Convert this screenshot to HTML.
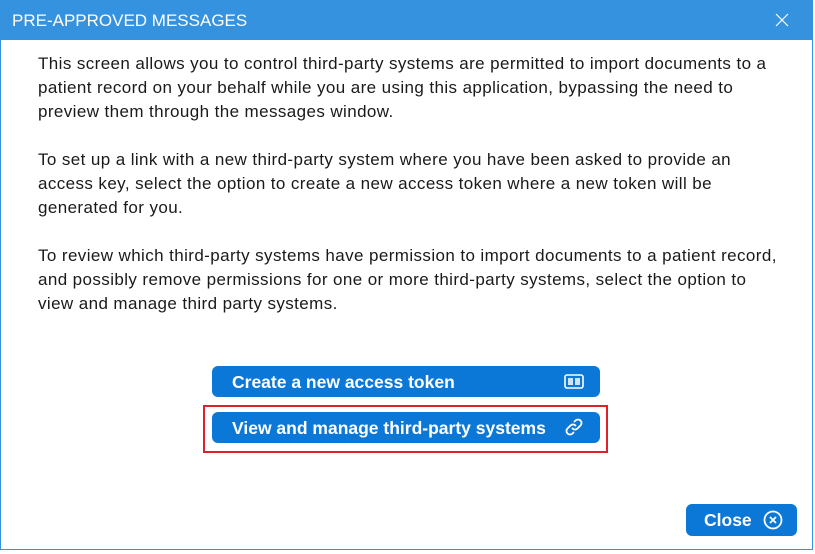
<!DOCTYPE html>
<html><head><meta charset="utf-8"><style>
html,body{margin:0;padding:0;background:#fff;width:815px;height:554px;overflow:hidden;font-family:"Liberation Sans",sans-serif}
.win{position:absolute;left:0;top:0;width:811px;height:549px;border:1px solid #3592df;border-top:none;background:#fff}
.title{position:absolute;left:0;top:0;width:813px;height:40px;background:#3592df;color:#fff;font-size:17px;line-height:42px}
.title span{position:absolute;left:12px;top:0;white-space:nowrap}
.x{position:absolute;left:774px;top:12px}
.body{position:absolute;left:38px;top:52px;width:770px;font-size:17px;letter-spacing:0.4px;line-height:24px;color:#1a1a1a;white-space:nowrap}
.body p{margin:0 0 24px 0}
.btn{position:absolute;background:#0b78d8;color:#fff;border-radius:6px;font-weight:bold;font-size:17.5px}
.b1{left:212px;top:366px;width:388px;height:31px;line-height:32px}
.b2{left:212px;top:412px;width:388px;height:31px;line-height:32px}
.btn .t{position:absolute;left:20px;top:0}
.red{position:absolute;left:203px;top:405px;width:401px;height:44px;border:2px solid #e0202a}
.close{left:686px;top:504px;width:111px;height:32px;line-height:33px}
</style></head><body>
<div class="win"></div>
<div class="title"><span>PRE-APPROVED MESSAGES</span>
<svg class="x" width="16" height="16" viewBox="0 0 16 16"><path d="M2 2L14 14M14 2L2 14" stroke="#fff" stroke-width="1.2"/></svg></div>
<div class="body">
<p>This screen allows you to control third-party systems are permitted to import documents to a<br>patient record on your behalf while you are using this application, bypassing the need to<br>preview them through the messages window.</p>
<p>To set up a link with a new third-party system where you have been asked to provide an<br>access key, select the option to create a new access token where a new token will be<br>generated for you.</p>
<p>To review which third-party systems have permission to import documents to a patient record,<br>and possibly remove permissions for one or more third-party systems, select the option to<br>view and manage third party systems.</p>
</div>
<div class="btn b1"><span class="t">Create a new access token</span>
<svg style="position:absolute;left:352px;top:8px" width="20" height="15" viewBox="0 0 20 15"><rect x="1" y="1" width="18" height="13" rx="2" fill="none" stroke="#fff" stroke-width="1.6"/><rect x="4" y="4" width="5" height="7" fill="#cfe3f7"/><rect x="11" y="4" width="5" height="7" fill="#cfe3f7"/></svg></div>
<div class="red"></div>
<div class="btn b2"><span class="t">View and manage third-party systems</span>
<svg style="position:absolute;left:352px;top:5px" width="20" height="20" viewBox="0 0 20 20" fill="none" stroke="#fff" stroke-width="1.8" stroke-linecap="round"><path d="M8.5 11.5a3.5 3.5 0 0 0 5 0l3-3a3.5 3.5 0 0 0-5-5l-1 1"/><path d="M11.5 8.5a3.5 3.5 0 0 0-5 0l-3 3a3.5 3.5 0 0 0 5 5l1-1"/></svg></div>
<div class="btn close"><span class="t" style="left:18px">Close</span>
<svg style="position:absolute;left:77px;top:6px" width="20" height="20" viewBox="0 0 20 20" fill="none" stroke="#fff" stroke-width="1.8"><circle cx="10" cy="10" r="8.5"/><path d="M7 7l6 6M13 7l-6 6"/></svg></div>
</body></html>
